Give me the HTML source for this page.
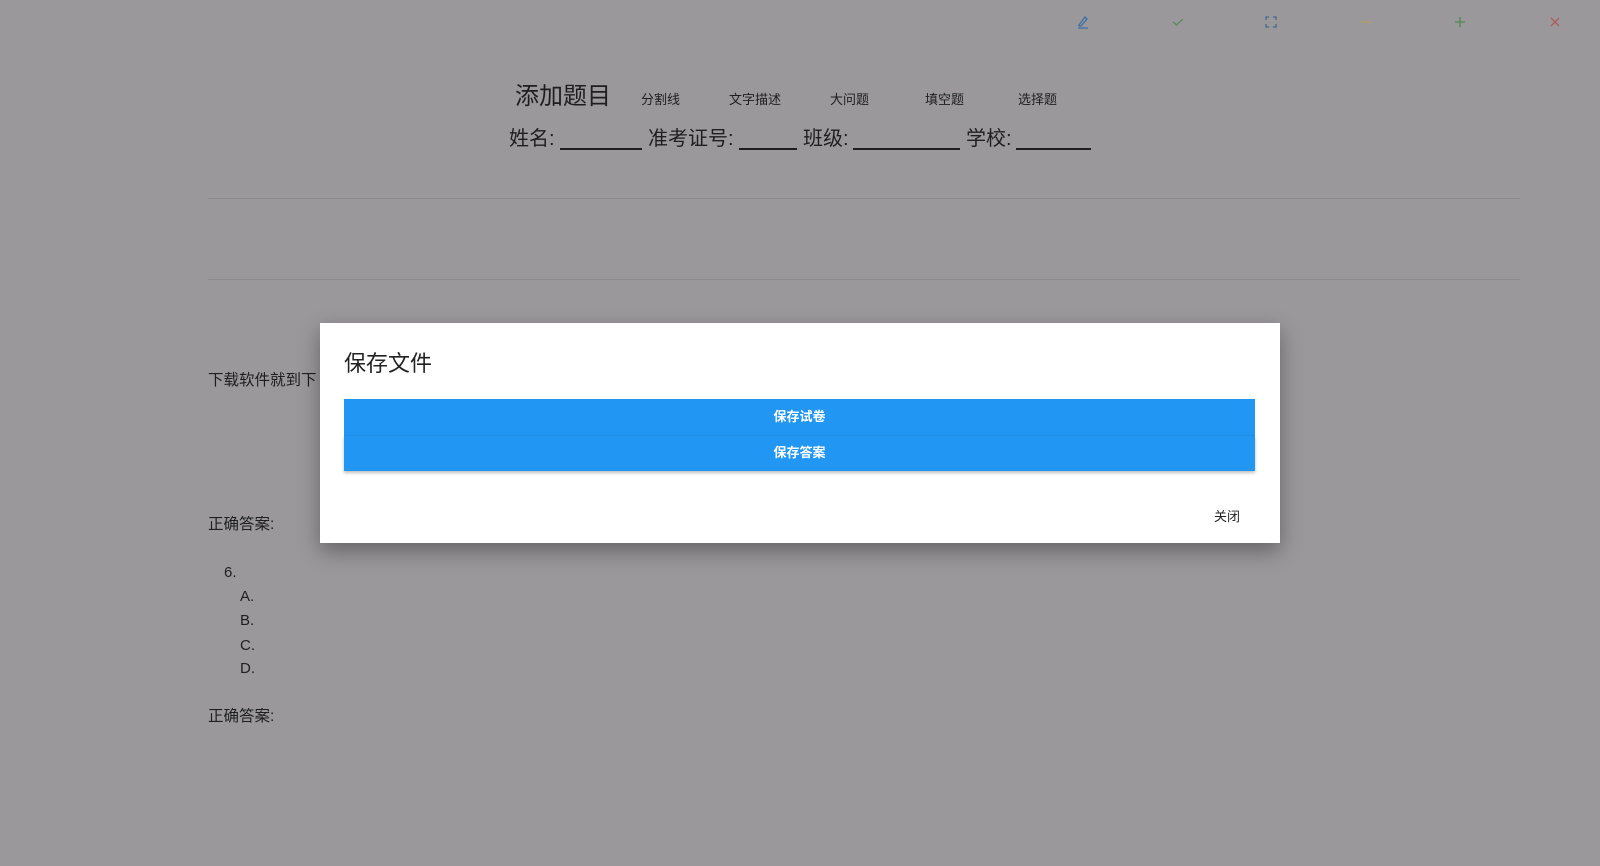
<!DOCTYPE html>
<html><head><meta charset="utf-8"><style>
*{margin:0;padding:0;box-sizing:border-box}
body{width:1600px;height:866px;background:#9a989b;font-family:"Liberation Sans","Noto Sans CJK SC",sans-serif;color:#1e1e1f;position:relative;overflow:hidden}
.a{position:absolute;white-space:nowrap;line-height:1}
.u{position:absolute;top:148px;height:1.5px;background:#1e1e1f}
.ic{position:absolute;top:14px;width:16px;height:16px}
.ln{position:absolute;left:208px;width:1312px;height:1px;background:#8c8a8d}
.dlg{position:absolute;left:320px;top:323px;width:960px;height:220px;background:#fff;box-shadow:0 8px 20px rgba(0,0,0,.35)}
.btn{position:absolute;left:24px;width:911px;height:36px;background:#2196f3;color:#fff;font-size:13px;font-weight:bold;text-align:center;line-height:36px}
</style></head><body>
<svg class="ic" style="left:1075px" viewBox="0 0 16 16" fill="none" stroke="#3b6fa8" stroke-width="1.3"><path d="M4 11 L10 3 L12 5 L6 12 L4 12 Z M3 14 H13"/></svg>
<svg class="ic" style="left:1170px" viewBox="0 0 16 16" fill="none" stroke="#5c8a5e" stroke-width="1.3"><path d="M3 8 L6.5 11 L13 5"/></svg>
<svg class="ic" style="left:1263px" viewBox="0 0 16 16" fill="none" stroke="#46678e" stroke-width="1.3"><path d="M3 6V3H6M10 3H13V6M13 10V13H10M6 13H3V10"/></svg>
<svg class="ic" style="left:1358px" viewBox="0 0 16 16" fill="none" stroke="#b0a060" stroke-width="1.3"><path d="M3 8H13"/></svg>
<svg class="ic" style="left:1452px" viewBox="0 0 16 16" fill="none" stroke="#4e8a50" stroke-width="1.3"><path d="M3 8H13M8 3V13"/></svg>
<svg class="ic" style="left:1547px" viewBox="0 0 16 16" fill="none" stroke="#b05a5a" stroke-width="1.3"><path d="M4 4L12 12M12 4L4 12"/></svg>

<div class="a" style="left:515px;top:85px;font-size:24px">添加题目</div>
<div class="a" style="left:641px;top:93px;font-size:13px">分割线</div>
<div class="a" style="left:729px;top:93px;font-size:13px">文字描述</div>
<div class="a" style="left:830px;top:93px;font-size:13px">大问题</div>
<div class="a" style="left:925px;top:93px;font-size:13px">填空题</div>
<div class="a" style="left:1018px;top:93px;font-size:13px">选择题</div>
<div class="a" style="left:509px;top:129px;font-size:20px">姓名:</div>
<div class="u" style="left:560px;width:82px"></div>
<div class="a" style="left:648px;top:129px;font-size:20px">准考证号:</div>
<div class="u" style="left:739px;width:58px"></div>
<div class="a" style="left:803px;top:129px;font-size:20px">班级:</div>
<div class="u" style="left:853px;width:107px"></div>
<div class="a" style="left:966px;top:129px;font-size:20px">学校:</div>
<div class="u" style="left:1016px;width:75px"></div>
<div class="ln" style="top:198px"></div>
<div class="ln" style="top:279px"></div>
<div class="a" style="left:208px;top:373px;font-size:15.5px">下载软件就到下</div>
<div class="a" style="left:208px;top:517px;font-size:15.5px">正确答案:</div>
<div class="a" style="left:224px;top:565px;font-size:15px">6.</div>
<div class="a" style="left:240px;top:589px;font-size:15px">A.</div>
<div class="a" style="left:240px;top:613px;font-size:15px">B.</div>
<div class="a" style="left:240px;top:638px;font-size:15px">C.</div>
<div class="a" style="left:240px;top:661px;font-size:15px">D.</div>
<div class="a" style="left:208px;top:709px;font-size:15.5px">正确答案:</div>

<div class="dlg">
<div class="a" style="left:24px;top:30px;font-size:22px;color:#222">保存文件</div>
<div class="btn" style="top:76px">保存试卷</div>
<div class="btn" style="top:112px;box-shadow:0 2px 3px rgba(0,0,0,.25);border-top:1px solid #1e8ee6;line-height:34px">保存答案</div>
<div class="a" style="left:894px;top:187px;font-size:13px;color:#222">关闭</div>
</div>
</body></html>
